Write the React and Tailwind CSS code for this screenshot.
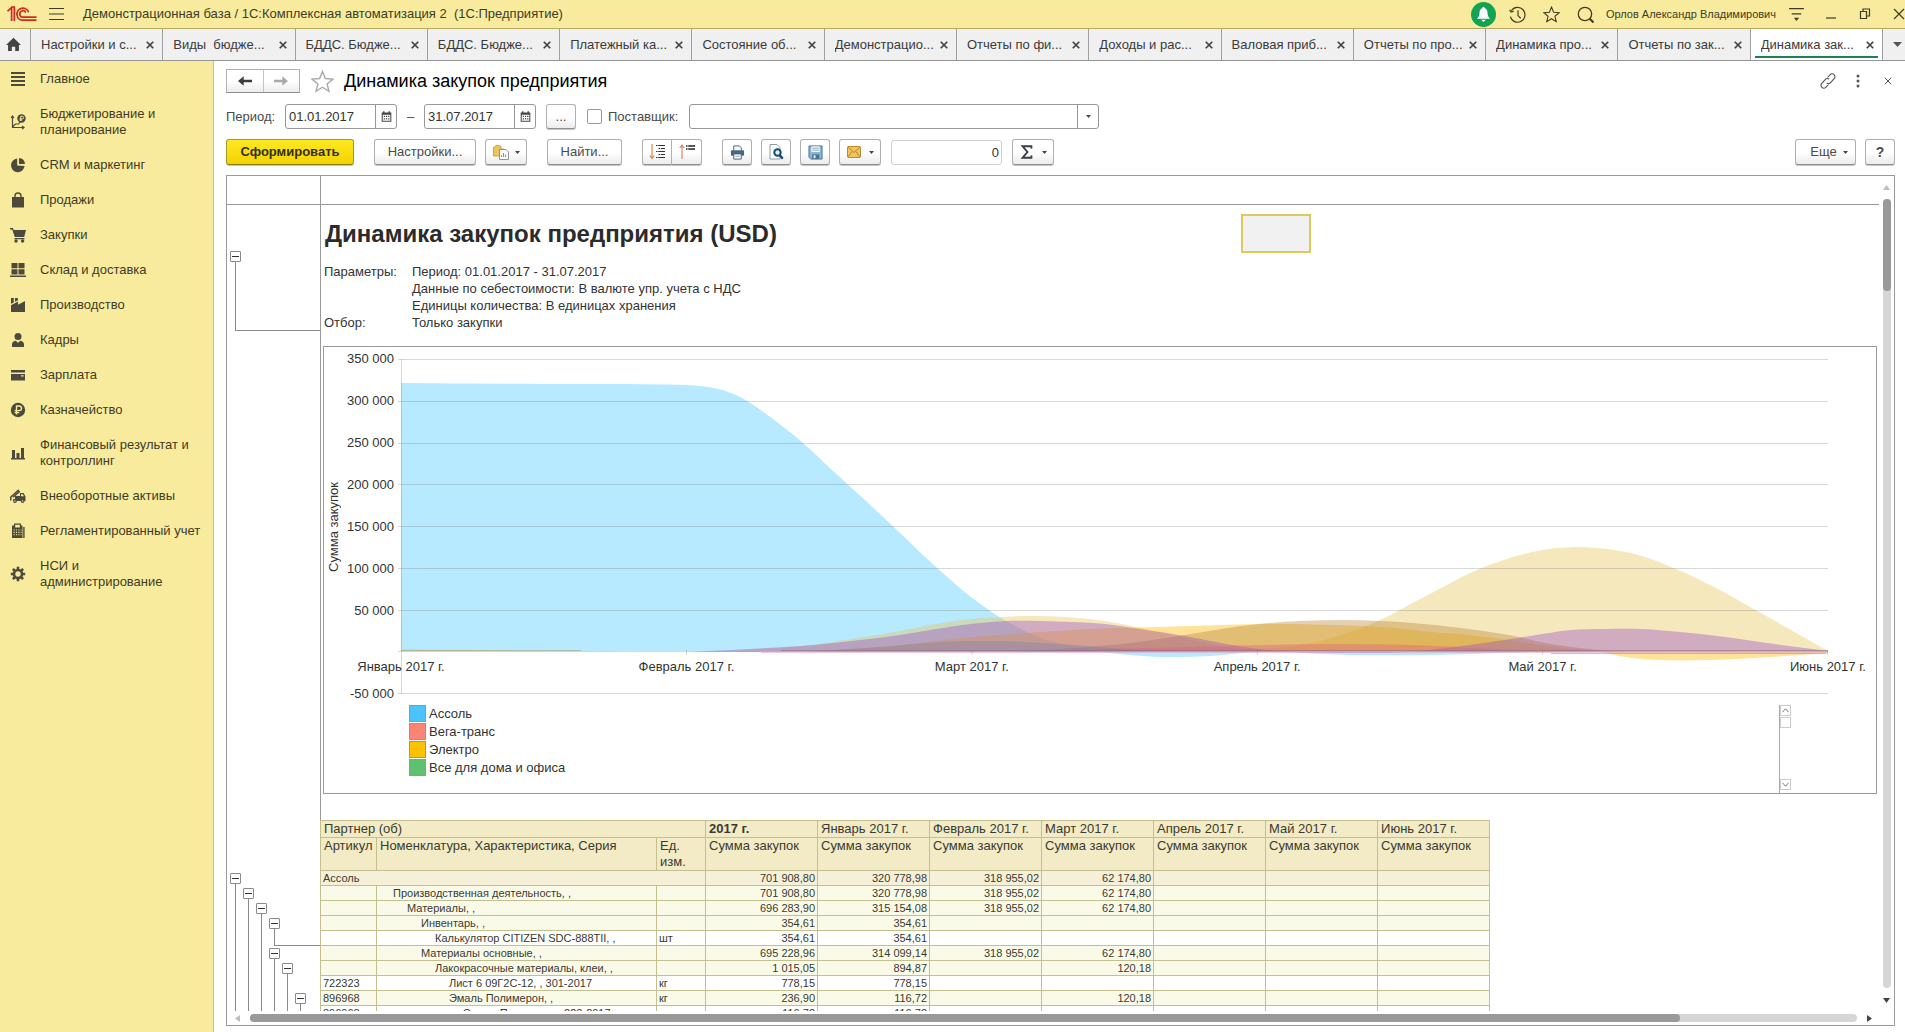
import React from "react";

/* ---------- icons ---------- */

const Svg = ({ size = 16, className = "", children, ...rest }) => (
  <svg width={size} height={size} viewBox="0 0 16 16" className={className} aria-hidden="true" {...rest}>
    {children}
  </svg>
);

const Logo = () => (
  <svg width="30" height="16" viewBox="0 0 30 16" fill="none" stroke="#d42a1e" strokeWidth="1.7" aria-hidden="true">
    <path d="M0.5 5.2 L4.6 1.6 V15" />
    <path d="M7.3 15 V1 H4.5" />
    <path d="M21.6 6.2 A6 6 0 1 0 16.2 14.2 H29.5" />
    <path d="M18.8 6.6 A3.2 3.2 0 1 0 16.2 11.2 H29.5" />
  </svg>
);

const dark = "#4c4a3c";
const sideIcons = {
  main: <path fill={dark} d="M1 1h14v2H1zM1 5h14v2H1zM1 9h14v2H1zM1 13h14v2H1z" />,
  plan: (
    <>
      <path fill="none" stroke={dark} strokeWidth="1.2" d="M2.5 2v11.5H14M1 4l1.5-2L4 4M12 12l2 1.5L12 15M2.5 13l3-3h3l2-2.5" />
      <circle cx="11.5" cy="4.5" r="4.2" fill={dark} />
      <path fill="none" stroke="#f8eb9e" strokeWidth="1" d="M10.7 7V2.3h1.6a1.3 1.3 0 0 1 0 2.6H9.6M9.6 6h2.6" />
    </>
  ),
  crm: (
    <>
      <path fill={dark} d="M7.2 1.6A6.8 6.8 0 1 0 14.6 9L7.2 8.4z" />
      <path fill={dark} d="M9 1a6.6 6.6 0 0 1 6 6H9z" />
    </>
  ),
  bag: (
    <>
      <path fill={dark} d="M2 5h12v10.5H2z" />
      <path fill="none" stroke={dark} strokeWidth="1.4" d="M5 7V4a3 3 0 0 1 6 0v3" />
    </>
  ),
  cart: (
    <>
      <path fill={dark} d="M0 1h3l.7 2H16l-1.8 7H4.8L2.2 2.4H0zM4.5 11h10v1.3h-10z" />
      <circle cx="6" cy="14" r="1.7" fill={dark} />
      <circle cx="12.6" cy="14" r="1.7" fill={dark} />
    </>
  ),
  store: <path fill={dark} d="M1.5 1h6v5.2h-6zM8.5 1h6v5.2h-6zM1.5 7.2h6v5.2h-6zM8.5 7.2h6v5.2h-6zM0 13.4h16V15H0z" />,
  factory: <path fill={dark} d="M1 1h2.8v4.4L1 6.8zM5 1h2.8v2.5L5 4.8zM1 8.2l7-3.7v3.2l7-3.7V15H1z" />,
  person: (
    <>
      <circle cx="8" cy="4.5" r="3.5" fill={dark} />
      <path fill={dark} d="M2 15v-3c0-2 2-3 4-3.2L8 11l2-2.2c2 .2 4 1.2 4 3.2v3z" />
    </>
  ),
  card: <path fill={dark} d="M1 3h14v2.4H1zM1 7h14v6.5H1zM11 8.3v1.3h2.6V8.3z" fillRule="evenodd" />,
  ruble: (
    <>
      <circle cx="8" cy="8" r="7.2" fill={dark} />
      <path fill="none" stroke="#f8eb9e" strokeWidth="1.4" d="M6.5 12.5V4h2.7a2.3 2.3 0 0 1 0 4.6H4.6M4.6 10.6h4.6" />
    </>
  ),
  bars: <path fill={dark} d="M2 5h3v8H2zM6.5 8h3v5h-3zM11 3h3v10h-3zM1 13h14v1.5H1z" />,
  truck: (
    <>
      <path fill="none" stroke={dark} strokeWidth="1.5" d="M.8 12.5V9l7.4-6.6 1 1.4L3 9.3M3 12h3" />
      <path fill={dark} d="M5 8h5V5h3.5l2 3.5V13H5zM11 6.2v2h3l-1.2-2z" fillRule="evenodd" />
      <circle cx="5" cy="13" r="1.9" fill={dark} />
      <circle cx="12.6" cy="13" r="1.9" fill={dark} />
      <circle cx="5" cy="13" r="0.7" fill="#f8eb9e" />
      <circle cx="12.6" cy="13" r="0.7" fill="#f8eb9e" />
    </>
  ),
  calc: (
    <>
      <path fill={dark} d="M4 .5h7v2h1.5V15H2V2.5h2zM5.2 1.7v2.8h4.6V1.7z" fillRule="evenodd" />
      <path fill="none" stroke="#f8eb9e" strokeWidth="1.1" strokeDasharray="1.2 1.2" d="M3.5 7h8M3.5 9.4h8M3.5 11.8h8" />
      <path fill={dark} d="M13.2 4h1.4v11h-1.4z" />
    </>
  ),
  gear: (
    <>
      <circle cx="8" cy="8" r="4" fill="none" stroke={dark} strokeWidth="2.6" />
      <path stroke={dark} strokeWidth="2.6" d="M8 .8v2.4M8 12.8v2.4M.8 8h2.4M12.8 8h2.4M2.9 2.9l1.7 1.7M11.4 11.4l1.7 1.7M2.9 13.1l1.7-1.7M11.4 4.6l1.7-1.7" />
    </>
  ),
};

const StarIcon = ({ size, stroke }) => (
  <Svg size={size} fill="none" stroke={stroke} strokeWidth="1">
    <path d="M8 1l2 4.9 5.3.4-4.1 3.4 1.3 5.1L8 12l-4.5 2.8 1.3-5.1L.7 6.3 6 5.9z" />
  </Svg>
);

const Caret = ({ className = "" }) => (
  <svg width="5" height="3" viewBox="0 0 5 3" className={className} aria-hidden="true">
    <path d="M0 0h5L2.5 3z" fill="#444" />
  </svg>
);

const CalendarIcon = () => (
  <Svg size={11}>
    <path fill="#444" d="M1 2h2V.5h2V2h6V.5h2V2h2v13.5H1zM2.5 5.5V14h11V5.5z" fillRule="evenodd" />
    <path stroke="#444" strokeWidth="1.8" strokeDasharray="1.8 1.4" d="M4 7.8h8.5M4 11.4h8.5" />
  </Svg>
);

/* ---------- data ---------- */

const tabs = [
  "Настройки и с...",
  "Виды  бюдже...",
  "БДДС. Бюдже...",
  "БДДС. Бюдже...",
  "Платежный ка...",
  "Состояние об...",
  "Демонстрацио...",
  "Отчеты по фи...",
  "Доходы и рас...",
  "Валовая приб...",
  "Отчеты по про...",
  "Динамика про...",
  "Отчеты по зак...",
  "Динамика зак...",
];

const menu = [
  ["main", "Главное"],
  ["plan", "Бюджетирование и планирование"],
  ["crm", "CRM и маркетинг"],
  ["bag", "Продажи"],
  ["cart", "Закупки"],
  ["store", "Склад и доставка"],
  ["factory", "Производство"],
  ["person", "Кадры"],
  ["card", "Зарплата"],
  ["ruble", "Казначейство"],
  ["bars", "Финансовый результат и контроллинг"],
  ["truck", "Внеоборотные активы"],
  ["calc", "Регламентированный учет"],
  ["gear", "НСИ и администрирование"],
];

const months = ["Январь 2017 г.", "Февраль 2017 г.", "Март 2017 г.", "Апрель 2017 г.", "Май 2017 г.", "Июнь 2017 г."];
const yLabels = ["350 000", "300 000", "250 000", "200 000", "150 000", "100 000", "50 000", "", "-50 000"];
const legend = [
  ["Ассоль", "bg-[#4cc3fb]"],
  ["Вега-транс", "bg-[#fb8474]"],
  ["Электро", "bg-[#fbc205]"],
  ["Все для дома и офиса", "bg-[#5fc070]"],
];

/* Area outlines: x along the plot, y above (+) or below (-) the zero line */
const ZERO = 293;
const series = [
  {
    fill: "#4cc8ff",
    pts: [[0, 269], [140, 268], [285, 267], [317, 263], [341, 254], [368, 236], [402, 209], [431, 182], [465, 151], [499, 119], [535, 85], [570, 55], [605, 31], [640, 14], [685, 3], [717, -2], [765, -5], [810, -4], [858, 0], [950, -3], [1030, -3], [1141, 0], [1427, 0]],
  },
  {
    fill: "#e6c65a",
    pts: [[0, 3], [150, 1], [300, 0], [400, 6], [450, 13], [499, 21], [540, 29], [580, 34], [627, 36], [665, 35], [704, 31], [740, 24], [775, 16], [820, 6], [858, 3], [905, 8], [940, 17], [979, 32], [1025, 56], [1076, 82], [1127, 99], [1175, 105], [1230, 99], [1275, 83], [1315, 64], [1351, 44], [1390, 22], [1427, 1]],
  },
  {
    fill: "#fdb900",
    pts: [[400, 0], [499, 7], [560, 14], [627, 19], [690, 23], [755, 25], [820, 27], [883, 28], [930, 27], [980, 25], [1030, 20], [1076, 16], [1140, 7], [1199, 0], [1225, -5], [1255, -8], [1310, -8], [1370, -5], [1427, -1]],
  },
  {
    fill: "#b8863c",
    pts: [[610, 0], [672, 4], [730, 9], [784, 17], [820, 23], [858, 28], [900, 31], [941, 32], [980, 31], [1012, 29], [1060, 24], [1108, 17], [1150, 8], [1198, 2], [1230, 0]],
  },
  {
    fill: "#9a4fc4",
    pts: [[285, 0], [400, 6], [450, 11], [499, 17], [535, 23], [570, 28], [605, 31], [640, 31], [670, 30], [704, 28], [745, 22], [784, 16], [820, 9], [858, 3], [890, 0], [960, -1], [1010, 0], [1045, 4], [1076, 8], [1110, 13], [1141, 18], [1170, 22], [1204, 23], [1240, 23], [1268, 21], [1300, 18], [1332, 14], [1380, 7], [1427, 1]],
  },
  {
    fill: "#e0607c",
    pts: [[600, 0], [700, 3], [784, 5], [858, 7], [935, 8], [1010, 7], [1076, 4], [1150, 0]],
  },
  {
    fill: "#7f7fae",
    pts: [[400, 0], [480, 5], [540, 10], [600, 11], [660, 8], [740, 2], [800, 0]],
  },
];

/* Smooth curve through the points, closed along the zero line */
function areaPath(pts) {
  const p = pts.map(([x, v]) => [x, ZERO - v]);
  let d = "M" + p[0][0] + " " + ZERO + "L" + p[0][0] + " " + p[0][1];
  for (let i = 0; i < p.length - 1; i++) {
    const a = p[Math.max(i - 1, 0)];
    const b = p[i];
    const c = p[i + 1];
    const e = p[Math.min(i + 2, p.length - 1)];
    const h = (c[0] - b[0]) / 3;
    const s1 = (c[1] - a[1]) / (c[0] - a[0]);
    const s2 = (e[1] - b[1]) / (e[0] - b[0]);
    d += "C" + [b[0] + h, b[1] + s1 * h, c[0] - h, c[1] - s2 * h, c[0], c[1]].map((n) => n.toFixed(1)).join(" ");
  }
  return d + "V" + ZERO + "z";
}

const rows = [
  { name: "Производственная деятельность, ,", pad: "pl-4", v: ["701 908,80", "320 778,98", "318 955,02", "62 174,80"] },
  { name: "Материалы, ,", pad: "pl-[30px]", v: ["696 283,90", "315 154,08", "318 955,02", "62 174,80"] },
  { name: "Инвентарь, ,", pad: "pl-11", v: ["354,61", "354,61"] },
  { name: "Калькулятор CITIZEN SDC-888TII, ,", pad: "pl-[58px]", unit: "шт", leaf: true, v: ["354,61", "354,61"] },
  { name: "Материалы основные, ,", pad: "pl-11", v: ["695 228,96", "314 099,14", "318 955,02", "62 174,80"] },
  { name: "Лакокрасочные материалы, клеи, ,", pad: "pl-[58px]", v: ["1 015,05", "894,87", "", "120,18"] },
  { art: "722323", name: "Лист 6 09Г2С-12, , 301-2017", pad: "pl-[72px]", unit: "кг", leaf: true, v: ["778,15", "778,15"] },
  { art: "896968", name: "Эмаль Полимерон, ,", pad: "pl-[72px]", unit: "кг", v: ["236,90", "116,72", "", "120,18"] },
  { art: "896968", name: "Эмаль Полимерон, 223-2017", pad: "pl-[86px]", leaf: true, v: ["116,72", "116,72"] },
];

/* Outline tree beside the table: "|" line, "b" collapse box, "e" line end */
const tree = ["b", "|b", "||b", "|||b", "|||e", "|||b", "||||b", "|||||", "|||||b", "||||||"];

/* ---------- parts ---------- */

const btn =
  "flex items-center justify-center rounded-[3px] border border-[#b0b0b0] border-b-[#8f8f8f] bg-gradient-to-b from-white from-50% to-[#ececec] text-[#4a4a4a] shadow-[0_1px_0_#c4c4c4]";

const MinusBox = () => (
  <button aria-label="Свернуть" className="flex size-[11px] shrink-0 items-center justify-center rounded-[1px] border border-[#8a8a8a] bg-white">
    <span className="h-px w-[7px] bg-[#333]" />
  </button>
);

function TitleBar() {
  return (
    <header className="flex h-[29px] shrink-0 items-center border-b border-[#b9a95f] bg-[#f8eb9e] pl-[7px] text-[13px] text-[#3f3b24]">
      <Logo />
      <button aria-label="Меню" className="ml-3">
        <Svg stroke="#3f3b24" strokeWidth="1.2">
          <path d="M0 2.5h15M0 8h15M0 13.5h15" />
        </Svg>
      </button>
      <h1 className="ml-[18px] flex-1 whitespace-pre">Демонстрационная база / 1С:Комплексная автоматизация 2  (1С:Предприятие)</h1>
      <button aria-label="Уведомления" className="flex size-[25px] items-center justify-center rounded-full bg-[#12a452]">
        <Svg size={15} fill="#fff">
          <path d="M8 0c.8 0 1.2.6 1.2 1.3 2 .6 2.8 2.2 3 4.2.2 3 .7 5 2.8 7H1c2-2 2.6-4 2.8-7 .2-2 1-3.6 3-4.2C6.8.6 7.2 0 8 0zM5.5 13.6h5L8 16z" />
        </Svg>
      </button>
      <button aria-label="История" className="ml-[13px]">
        <Svg size={17} fill="none" stroke="#3f3b24" strokeWidth="1.1">
          <path d="M2.2 4.5A7 7 0 1 1 1.3 10M.6 3.6l1.4 2.2L4.5 5M8.5 4v5l2.5 2.5" />
        </Svg>
      </button>
      <button aria-label="Избранное" className="ml-[17px]">
        <StarIcon size={17} stroke="#3f3b24" />
      </button>
      <button aria-label="Поиск" className="ml-[17px]">
        <Svg size={17} fill="none" stroke="#3f3b24" strokeWidth="1.2">
          <circle cx="7.5" cy="7.5" r="6.3" />
          <path d="M12 12l3.5 3.5" strokeWidth="2" />
        </Svg>
      </button>
      <span className="ml-3 whitespace-nowrap text-[11px]">Орлов Александр Владимирович</span>
      <button aria-label="Настройка панели" className="ml-3">
        <Svg size={17} stroke="#3f3b24" strokeWidth="1.2">
          <path d="M1 2.5h14M3.5 7.5h9" />
          <path d="M5.5 11h5L8 14z" fill="#3f3b24" stroke="none" />
        </Svg>
      </button>
      <button aria-label="Свернуть окно" className="ml-[18px]">
        <Svg stroke="#3f3b24" strokeWidth="1.2"><path d="M3 12h10" /></Svg>
      </button>
      <button aria-label="Развернуть окно" className="ml-[18px]">
        <Svg fill="none" stroke="#3f3b24" strokeWidth="1.2"><path d="M3.5 5.5h6v7h-6zM6 5V3h6.5v7H10" /></Svg>
      </button>
      <button aria-label="Закрыть окно" className="-mr-0.5 ml-[18px]">
        <Svg stroke="#3f3b24" strokeWidth="1.2"><path d="M3 3l10 10M13 3L3 13" /></Svg>
      </button>
    </header>
  );
}

function TabBar() {
  return (
    <nav className="flex h-8 shrink-0 border-b border-[#969696] bg-[#f0f0f0] text-[13px] text-[#3a3a3a]">
      <button aria-label="Начальная страница" className="flex w-[30px] items-center justify-center pr-1">
        <Svg size={15} fill="#444">
          <path d="M8 .8L16 8.5h-2.2V15H9.8v-4.5H6.2V15H2.2V8.5H0z" />
        </Svg>
      </button>
      {tabs.map((t, i) => {
        const active = i === tabs.length - 1;
        return (
          <div
            key={i}
            className={
              "relative flex min-w-0 flex-1 items-center border-l border-[#a0a0a0] pl-[10px] pr-2 " + (active ? "bg-white" : "")
            }
          >
            <button className="min-w-0 flex-1 overflow-hidden whitespace-pre text-left">{t}</button>
            <button aria-label="Закрыть вкладку">
              <Svg size={8} stroke="#444" strokeWidth="3.5"><path d="M1.5 1.5l13 13M14.5 1.5l-13 13" /></Svg>
            </button>
            {active && <span className="absolute inset-x-1 bottom-[2px] h-0.5 bg-[#1c8450]" />}
          </div>
        );
      })}
      <button aria-label="Все вкладки" className="flex w-[23px] items-center justify-end border-l border-[#a0a0a0] pr-[3px]">
        <svg width="9" height="5" viewBox="0 0 9 5"><path d="M0 0h9L4.5 5z" fill="#555" /></svg>
      </button>
    </nav>
  );
}

function Sidebar() {
  return (
    <aside className="w-[214px] shrink-0 border-r border-[#c9c08a] bg-[#f8eb9e] text-[13px] leading-4 text-[#3f3b24]">
      {menu.map(([icon, label]) => (
        <a key={label} href="#" className="flex items-center gap-[14px] pb-[9px] pl-[10px] pr-[11px] pt-[10px]">
          <Svg className="shrink-0">{sideIcons[icon]}</Svg>
          <span className="min-w-0 flex-1">{label}</span>
        </a>
      ))}
    </aside>
  );
}

const DateField = ({ id, value, label }) => (
  <div className="flex h-full w-28 rounded-[3px] border border-[#989898] bg-white">
    <input id={id} aria-label={label} defaultValue={value} className="min-w-0 flex-1 pl-[3px] text-[#333] outline-none" />
    <button aria-label="Календарь" className="flex w-[21px] items-center justify-center border-l border-[#989898]">
      <CalendarIcon />
    </button>
  </div>
);

function FormHead() {
  return (
    <>
      <div className="flex h-6 items-center">
        <div className="flex h-full w-[74px] border border-[#b0b0b0] border-b-[#8f8f8f] bg-gradient-to-b from-white from-50% to-[#ececec]">
          <button aria-label="Назад" className="flex flex-1 items-center justify-center border-r border-[#c4c4c4]">
            <Svg size={14} fill="#3c3c3c"><path d="M0 8l6.5-5.5v4H16v3H6.5v4z" /></Svg>
          </button>
          <button aria-label="Вперед" className="flex flex-1 items-center justify-center">
            <Svg size={14} fill="#aaa"><path d="M16 8L9.5 2.5v4H0v3h9.5v4z" /></Svg>
          </button>
        </div>
        <button aria-label="В избранное" className="ml-[11px]"><StarIcon size={23} stroke="#aaaaaa" /></button>
        <h2 className="ml-[10px] flex-1 text-lg leading-6 text-black">Динамика закупок предприятия</h2>
        <button aria-label="Ссылка" className="mr-[14px]">
          <Svg fill="none" stroke="#555" strokeWidth="1.1">
            <path d="M7.5 4.5l2.5-2.7a2.6 2.6 0 0 1 4.2 3.8l-3.6 4a2.6 2.6 0 0 1-3.8.2M8.5 11.5L6 14.2a2.6 2.6 0 0 1-4.2-3.8l3.6-4a2.6 2.6 0 0 1 3.8-.2" />
          </Svg>
        </button>
        <button aria-label="Дополнительно" className="mr-[14px]">
          <Svg fill="#555"><circle cx="8" cy="3" r="1.5" /><circle cx="8" cy="8" r="1.5" /><circle cx="8" cy="13" r="1.5" /></Svg>
        </button>
        <button aria-label="Закрыть" className="mr-[3px] pl-1">
          <Svg size={8} stroke="#555" strokeWidth="2"><path d="M1.5 1.5l13 13M14.5 1.5l-13 13" /></Svg>
        </button>
      </div>

      <div className="mt-[11px] flex h-[25px] items-center text-[#4a4a4a]">
        <label htmlFor="from" className="w-[59px]">Период:</label>
        <DateField id="from" label="Начало периода" value="01.01.2017" />
        <span className="w-[27px] text-center">–</span>
        <DateField id="to" label="Конец периода" value="31.07.2017" />
        <button aria-label="Выбрать период" className={btn + " ml-[10px] h-full w-[30px]"}>...</button>
        <input id="use-supplier" type="checkbox" className="ml-[11px] size-[15px] appearance-none rounded-[2px] border border-[#989898] bg-white" />
        <label htmlFor="use-supplier" className="ml-[6px] w-[81px]">Поставщик:</label>
        <div className="flex h-full w-[410px] rounded-[3px] border border-[#989898] bg-white">
          <input aria-label="Поставщик" className="min-w-0 flex-1 px-1 outline-none" />
          <button aria-label="Открыть список" className="flex w-[21px] items-center justify-center border-l border-[#989898]"><Caret /></button>
        </div>
      </div>

      <div className="mt-[10px] flex h-[26px] items-center">
        <button className="h-full w-32 rounded-[3px] border border-[#a89a20] border-b-[#8b7d10] bg-gradient-to-b from-[#ffe81f] to-[#f3d200] font-bold text-[#33300f] shadow-[0_1px_0_#c4c4c4]">
          Сформировать
        </button>
        <button className={btn + " ml-5 h-full w-[102px]"}>Настройки...</button>
        <button aria-label="Варианты отчета" className={btn + " ml-[9px] h-full w-[42px] gap-[6px]"}>
          <Svg>
            <path d="M.5 3.5L4 1l4 1.5V5h3v3H8v4H.5z" fill="#f0c45c" stroke="#c2913a" strokeWidth=".8" />
            <path d="M6.5 5.5H13l2.5 2.5v7.5h-9z" fill="#fff" stroke="#7d8b96" strokeWidth=".9" />
            <path d="M8.5 13V11M10.5 13V9M12.5 13v-2.5" stroke="#b98a4a" strokeWidth="1.1" />
          </Svg>
          <Caret />
        </button>
        <button className={btn + " ml-5 h-full w-[75px]"}>Найти...</button>
        <div className="ml-5 flex h-full">
          <button aria-label="Развернуть группы" className={btn + " w-[30px] rounded-r-none"}>
            <Svg>
              <path d="M3 0v14M.8 11.5L3 14.5l2.2-3" stroke="#d98a5c" fill="none" strokeWidth="1.2" />
              <path d="M7 1.5h9M9.5 4.5H16M7 7.5h9M9.5 10.5H16M7 13.5h9" stroke="#333" strokeWidth="1.1" strokeDasharray="1.5 .7 10" />
            </Svg>
          </button>
          <button aria-label="Свернуть группы" className={btn + " w-[30px] rounded-l-none border-l-0"}>
            <Svg>
              <path d="M3 15V1M.8 4L3 1l2.2 3" stroke="#d98a5c" fill="none" strokeWidth="1.2" />
              <path d="M7 2h9M7 5h9" stroke="#222" strokeWidth="1.3" strokeDasharray="1.5 .7 10" />
            </Svg>
          </button>
        </div>
        <button aria-label="Печать" className={btn + " ml-5 h-full w-[30px]"}>
          <Svg size={15}>
            <path d="M4 6V1h6l2 2v3" fill="#fff" stroke="#3f5d78" />
            <rect x="1" y="5.5" width="14" height="6" rx="1" fill="#456785" />
            <path d="M4 9.5h8V15H4z" fill="#fff" stroke="#3f5d78" />
            <path d="M5.5 12h5" stroke="#8aa0b4" />
          </Svg>
        </button>
        <button aria-label="Предварительный просмотр" className={btn + " ml-[9px] h-full w-[30px]"}>
          <Svg>
            <path d="M2 .5h7l3 3V15H2z" fill="#fff" stroke="#8a9aa6" />
            <circle cx="9.5" cy="8.5" r="3.2" fill="#e3f1f8" stroke="#124c6e" strokeWidth="2" />
            <path d="M11.7 11l3 3.8" stroke="#124c6e" strokeWidth="2.4" />
          </Svg>
        </button>
        <button aria-label="Сохранить" className={btn + " ml-[9px] h-full w-[30px]"}>
          <Svg size={15}>
            <path d="M1 1h14v14H3l-2-2z" fill="#8bb4d0" stroke="#4b7391" />
            <path d="M3.5 1.5h9v6h-9z" fill="#eef6fb" />
            <path d="M4.5 3.5h7M4.5 5.5h7" stroke="#90aec2" />
            <path d="M4.5 10h7.5v5H4.5z" fill="#4b7391" />
            <path d="M6 11h2v3H6z" fill="#eef6fb" />
          </Svg>
        </button>
        <button aria-label="Отправить" className={btn + " ml-[9px] h-full w-[42px] gap-2"}>
          <svg width="14" height="12" viewBox="0 0 14 12" aria-hidden="true">
            <rect x=".5" y=".5" width="13" height="11" rx="1" fill="#f2c45e" stroke="#b98931" />
            <path d="M1 1l6 5.5L13 1M1 11l4-5.5M13 11L9 5.5" fill="none" stroke="#b07c26" strokeWidth=".9" />
          </svg>
          <Caret />
        </button>
        <input aria-label="Сумма выделенных ячеек" defaultValue="0" className="ml-[10px] h-[25px] w-[111px] rounded-[3px] border border-[#d0d0d0] bg-white px-[2px] text-right text-[#333] outline-none" />
        <button aria-label="Сумма" className={btn + " ml-[10px] h-full w-[42px] gap-2"}>
          <Svg size={14} fill="none" stroke="#3a3f47" strokeWidth="2.2"><path d="M13 4V1.5H3L8.5 8 3 14.5h10V12" /></Svg>
          <Caret />
        </button>
        <button className={btn + " ml-auto h-full w-[61px] gap-[6px] pl-[7px]"}>Еще <Caret /></button>
        <button aria-label="Справка" className={btn + " ml-[9px] h-full w-[30px] text-sm font-bold"}>?</button>
      </div>
    </>
  );
}

function Plot() {
  return (
    <svg viewBox="0 0 1427 335" preserveAspectRatio="none" className="block h-[335px] w-full overflow-visible" aria-hidden="true">
      <g fillOpacity=".4">
        {series.map((s) => (
          <path key={s.fill} fill={s.fill} d={areaPath(s.pts)} />
        ))}
      </g>
      <path d="M380 291.5H1427" stroke="#8b6f8a" strokeOpacity=".6" />
      <path d="M360 293H1427" stroke="#e8a3c0" strokeOpacity=".6" strokeWidth="2" />
      <path d="M0 291.5H180" stroke="#a3a57c" strokeOpacity=".6" />
      <path d="M1150 294.5H1425" stroke="#c8785a" strokeOpacity=".5" />
      <g stroke="#7b7b7b" strokeOpacity=".3">
        <path d="M-3 .5H1427M-3 42.5H1427M-3 84.5H1427M-3 125.5H1427M-3 167.5H1427M-3 209.5H1427M-3 251.5H1427M-3 292.5H0M-3 334.5H1427M.5 0V335" />
        <path d="M285.5 291v5M571 291v5M856.5 291v5M1141.5 291v5M1426.5 291v5" />
      </g>
    </svg>
  );
}

function Chart() {
  return (
    <figure className="mx-[2px] border border-[#9a9a9a] bg-white pt-3 text-[#333]">
      <div className="flex h-[335px]">
        <div className="flex w-5 items-center justify-center">
          <span className="rotate-180 whitespace-nowrap leading-4 [writing-mode:vertical-rl]">Сумма закупок</span>
        </div>
        <div className="flex w-[50px] flex-col justify-between text-right">
          {yLabels.map((l, i) => (
            <span key={i} className="flex h-0 items-center justify-end whitespace-nowrap">{l}</span>
          ))}
        </div>
        <div className="relative ml-[7px] mr-12 min-w-0 flex-1">
          <Plot />
          <div className="absolute inset-x-0 top-[308px] flex justify-between">
            {months.map((m) => (
              <span key={m} className="flex h-0 w-0 items-center justify-center whitespace-nowrap">{m}</span>
            ))}
          </div>
        </div>
      </div>
      <div className="mx-[85px] mt-[11px] flex h-[88px] justify-between">
        <ul className="space-y-px">
          {legend.map(([l, c]) => (
            <li key={l} className="flex h-[17px] items-center gap-[3px] leading-4">
              <span className={"size-[17px] border border-[#8f9a9a] " + c} />
              {l}
            </li>
          ))}
        </ul>
        <div className="flex w-3 flex-col border-l border-[#3fdcd2]">
          <button aria-label="Вверх" className="flex h-[11px] items-center justify-center border border-[#ccc]">
            <Svg size={7} fill="none" stroke="#666" strokeWidth="2"><path d="M1 12l7-8 7 8" /></Svg>
          </button>
          <span className="mt-px h-[11px] border border-[#ccc]" />
          <button aria-label="Вниз" className="mb-[3px] mt-auto flex h-[11px] items-center justify-center border border-[#ccc]">
            <Svg size={7} fill="none" stroke="#666" strokeWidth="2"><path d="M1 4l7 8 7-8" /></Svg>
          </button>
        </div>
      </div>
    </figure>
  );
}

function ReportTable() {
  const cell = "border border-[#c4bf8e] ";
  const head = cell + "px-[3px] text-left align-top font-normal leading-4 ";
  const num = cell + "px-[2px] text-right";
  return (
    <table className="w-[1170px] table-fixed border-collapse text-[11px] leading-[14px] text-[#3a3a30]">
      <colgroup>
        <col className="w-14" />
        <col className="w-[280px]" />
        <col className="w-[49px]" />
        {[0, 1, 2, 3, 4, 5, 6].map((i) => <col key={i} className="w-28" />)}
      </colgroup>
      <thead className="bg-[#f2ebc5] text-[13px]">
        <tr className="h-[17px]">
          <th colSpan={3} className={head}>Партнер (об)</th>
          <th className={cell + "px-[3px] text-left align-top font-bold leading-4"}>2017 г.</th>
          {months.map((m) => <th key={m} className={head + "whitespace-nowrap"}>{m}</th>)}
        </tr>
        <tr className="h-[33px]">
          <th className={head}>Артикул</th>
          <th className={head}>Номенклатура, Характеристика, Серия</th>
          <th className={head}>Ед. изм.</th>
          {[0, 1, 2, 3, 4, 5, 6].map((i) => <th key={i} className={head + "whitespace-nowrap"}>Сумма закупок</th>)}
        </tr>
      </thead>
      <tbody>
        <tr className="h-[15px] bg-[#f6f0d9]">
          <td colSpan={3} className={cell + "px-[2px]"}>Ассоль</td>
          {["701 908,80", "320 778,98", "318 955,02", "62 174,80", "", "", ""].map((v, i) => <td key={i} className={num}>{v}</td>)}
        </tr>
        {rows.map((r, i) => (
          <tr key={i} className={"h-[15px] " + (r.leaf ? "bg-white" : "bg-[#fafae9]")}>
            <td className={cell + "px-[2px]"}>{r.art}</td>
            <td className={cell + "whitespace-nowrap " + r.pad}>{r.name}</td>
            <td className={cell + "px-[2px]"}>{r.unit}</td>
            {[0, 1, 2, 3, 4, 5, 6].map((k) => <td key={k} className={num}>{r.v[k]}</td>)}
          </tr>
        ))}
      </tbody>
    </table>
  );
}

function TreeRow({ pattern }) {
  return (
    <div className="flex h-[15px] pl-[3px]">
      {pattern.split("").map((c, i) => {
        if (c === "b")
          return (
            <div key={i} className="flex w-[13px] flex-col items-start">
              <span className="ml-[5px] h-0.5" />
              <MinusBox />
              <span className="ml-[5px] flex-1 border-l border-[#8a8a8a]" />
            </div>
          );
        if (c === "e") return <div key={i} className="ml-[5px] h-[15px] flex-1 border-b border-l border-[#8a8a8a]" />;
        return (
          <div key={i} className="w-[13px] pl-[5px]">
            <div className="h-full border-l border-[#8a8a8a]" />
          </div>
        );
      })}
    </div>
  );
}

function ReportSheet() {
  const gutter = "border-r border-[#9a9a9a]";
  return (
    <div className="flex min-h-0 min-w-0 flex-1 flex-col overflow-hidden">
      <div className="flex h-[29px] shrink-0 border-b border-[#9a9a9a]">
        <div className={gutter + " w-[94px]"} />
      </div>
      <div className="grid min-h-0 grid-cols-[94px_minmax(0,1fr)] content-start">
        <div className={gutter + " flex flex-col pb-[15px] pl-[3px] pt-[46px]"}>
          <MinusBox />
          <div className="ml-[5px] flex-1 border-b border-l border-[#8a8a8a]" />
        </div>
        <div className="relative pb-[15px] pl-[3px] pt-[13px]">
          <h3 className="pl-px text-2xl font-bold text-[#2b2b2b]">Динамика закупок предприятия (USD)</h3>
          <dl className="mt-[13px] grid grid-cols-[88px_1fr] leading-[17px] text-[#333]">
            <dt className="row-span-3">Параметры:</dt>
            <dd>Период: 01.01.2017 - 31.07.2017</dd>
            <dd>Данные по себестоимости: В валюте упр. учета с НДС</dd>
            <dd>Единицы количества: В единицах хранения</dd>
            <dt>Отбор:</dt>
            <dd>Только закупки</dd>
          </dl>
          <div className="absolute left-[920px] top-[9px] h-[39px] w-[70px] border-2 border-[#dccb5c] bg-[#f1f1f1]" />
        </div>

        <div className={gutter} />
        <div className="pb-[26px]"><Chart /></div>

        <div className={gutter + " pt-[51px]"}>
          {tree.map((p, i) => <TreeRow key={i} pattern={p} />)}
        </div>
        <div className="-ml-px"><ReportTable /></div>
      </div>
    </div>
  );
}

export default function App() {
  return (
    <div className="flex h-screen flex-col overflow-hidden bg-white font-['Liberation_Sans',Arial,sans-serif]">
      <TitleBar />
      <TabBar />
      <div className="flex min-h-0 flex-1">
        <Sidebar />
        <main className="flex min-w-0 flex-1 flex-col pb-1.5 pl-3 pr-[10px] pt-2 text-[13px]">
          <FormHead />
          <section className="mt-[10px] flex min-h-0 flex-1 flex-col border border-[#9a9a9a] bg-white">
            <div className="flex min-h-0 flex-1">
              <ReportSheet />
              <div className="flex w-[15px] shrink-0 flex-col items-center pt-[9px]">
                <svg width="7" height="5" viewBox="0 0 7 5"><path d="M0 5h7L3.5 0z" fill="#bdbdbd" /></svg>
                <div className="mt-[9px] w-2 flex-1 rounded-full bg-[#d6d6d6]">
                  <div className="h-[92px] rounded-full bg-[#999]" />
                </div>
                <svg width="7" height="5" viewBox="0 0 7 5" className="mb-2 mt-[10px]"><path d="M0 0h7L3.5 5z" fill="#444" /></svg>
              </div>
            </div>
            <div className="flex h-[14px] shrink-0 items-center pl-2 pr-[22px]">
              <svg width="5" height="7" viewBox="0 0 5 7"><path d="M5 0v7L0 3.5z" fill="#bdbdbd" /></svg>
              <div className="mx-[10px] h-2 flex-1 rounded-full bg-[#d6d6d6]">
                <div className="h-2 w-[89%] rounded-full bg-[#999]" />
              </div>
              <svg width="5" height="7" viewBox="0 0 5 7"><path d="M0 0v7l5-3.5z" fill="#444" /></svg>
            </div>
          </section>
        </main>
      </div>
    </div>
  );
}
